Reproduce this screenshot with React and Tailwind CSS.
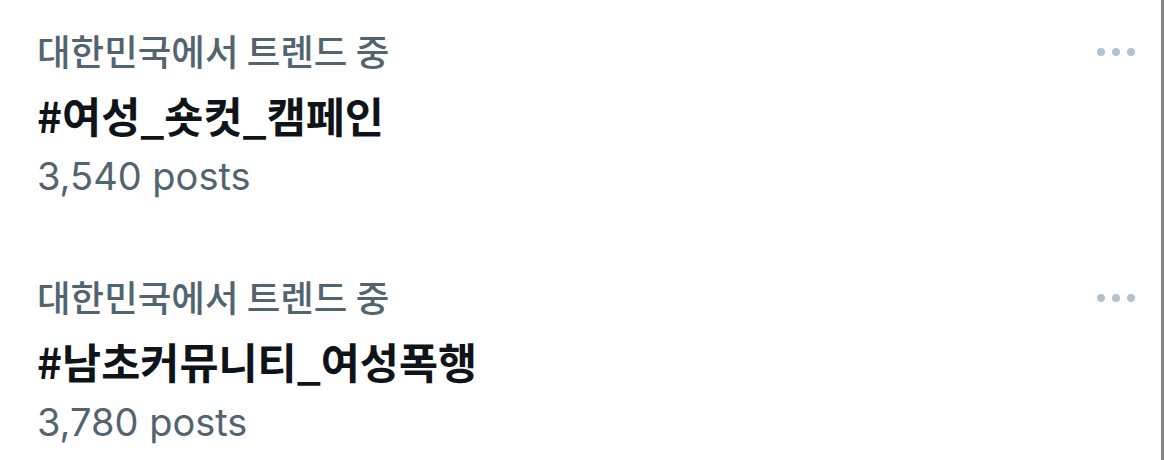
const TRENDS = [
  { key: 'a', label: '대한민국에서 트렌드 중', tag: '#여성_숏컷_캠페인', posts: '3,540 posts' },
  { key: 'b', label: '대한민국에서 트렌드 중', tag: '#남초커뮤니티_여성폭행', posts: '3,780 posts' },
];

const kr = "font-['Noto_Sans_CJK_KR',sans-serif]";

const MoreDots = () => (
  <div className="flex items-center gap-[7px] h-[52px] pr-[26px]">
    <span className="w-2 h-2 rounded-full bg-[#b3c2cc]" />
    <span className="w-2 h-2 rounded-full bg-[#b3c2cc]" />
    <span className="w-2 h-2 rounded-full bg-[#b3c2cc]" />
  </div>
);

const TrendItem = ({ item }) => {
  return (
    <div className="flex shrink-0 items-start justify-between pl-[37px] h-[246px]">
      <div className="flex flex-col whitespace-nowrap">
        <span className={`${kr} text-[36.5px] leading-[50px] font-medium text-[#536471]`}>
          {item.label}
        </span>
        <span className={`${kr} text-[42.5px] leading-[77px] font-bold text-[#0f1419]`}>
          {item.tag}
        </span>
        <span className="font-['Inter',sans-serif] text-[38px] leading-[46px] text-[#536471]">
          {item.posts}
        </span>
      </div>
      <MoreDots />
    </div>
  );
};

const App = () => {
  return (
    <div className="flex w-[1164px] h-[460px] bg-white overflow-hidden">
      <div className="flex-1 flex flex-col pt-[26px]">
        {TRENDS.map((item) => (
          <TrendItem key={item.key} item={item} />
        ))}
      </div>
      <div className="w-[3px] h-full bg-[#858585]" />
    </div>
  );
};

export default App;
